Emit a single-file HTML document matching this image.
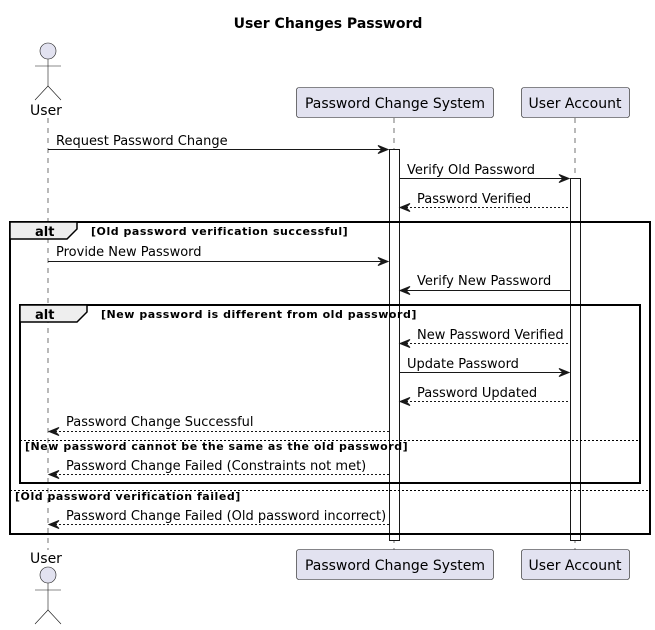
<!DOCTYPE html>
<html><head><meta charset="utf-8"><style>
html,body{margin:0;padding:0;background:#fff;}
svg{display:block;font-family:"DejaVu Sans","Liberation Sans",sans-serif;}
.m{font-size:13px;fill:#000;}
.g{font-size:11px;font-weight:bold;fill:#000;letter-spacing:0.53px;}
</style></head><body>
<svg width="655" height="630" viewBox="0 0 655 630" xmlns="http://www.w3.org/2000/svg">
<defs>
<g id="ar"><polygon points="-10,-4 0,0 -10,4 -6,0" fill="#181818" stroke="#181818" stroke-width="1"/></g>
<g id="al"><polygon points="10,-4 0,0 10,4 6,0" fill="#181818" stroke="#181818" stroke-width="1"/></g>
</defs>
<text x="328" y="28" text-anchor="middle" font-size="14" font-weight="bold">User Changes Password</text>

<g stroke="#181818" stroke-width="0.6" stroke-dasharray="5,5">
<line x1="48" y1="118" x2="48" y2="550"/>
<line x1="394" y1="118" x2="394" y2="550"/>
<line x1="575" y1="118" x2="575" y2="550"/>
</g>

<g fill="none" stroke="#181818" stroke-width="0.6">
<circle cx="48" cy="51" r="8" fill="#E2E2F0"/>
<line x1="48" y1="59" x2="48" y2="86"/><line x1="35" y1="66" x2="61" y2="66"/>
<polyline points="35,100 48,86 61,100"/>
<circle cx="48" cy="575" r="8" fill="#E2E2F0"/>
<line x1="48" y1="583" x2="48" y2="610"/><line x1="35" y1="590" x2="61" y2="590"/>
<polyline points="35,624 48,610 61,624"/>
</g>
<text x="46" y="115" text-anchor="middle" font-size="14">User</text>
<text x="46" y="563" text-anchor="middle" font-size="14">User</text>

<g fill="#E2E2F0" stroke="#181818" stroke-width="0.6">
<rect x="296.5" y="87.5" width="197" height="30" rx="2.5"/>
<rect x="521.5" y="87.5" width="108" height="30" rx="2.5"/>
<rect x="296.5" y="549.5" width="197" height="30" rx="2.5"/>
<rect x="521.5" y="549.5" width="108" height="30" rx="2.5"/>
</g>
<g font-size="14" text-anchor="middle">
<text x="395" y="108">Password Change System</text>
<text x="575" y="108">User Account</text>
<text x="395" y="570">Password Change System</text>
<text x="575" y="570">User Account</text>
</g>

<g fill="#fff" stroke="#181818" stroke-width="1">
<rect x="389.5" y="149.5" width="10" height="391"/>
<rect x="570.5" y="178.5" width="10" height="362"/>
</g>

<g fill="none" stroke="#000" stroke-width="2">
<rect x="10" y="222" width="640" height="312"/>
<rect x="20" y="305" width="620" height="178"/>
</g>
<path d="M10,222 H77 V229 L67,239 H10 Z" fill="#EEEEEE" stroke="#000" stroke-width="1.5"/>
<path d="M20,305 H87 V312 L77,322 H20 Z" fill="#EEEEEE" stroke="#000" stroke-width="1.5"/>
<text x="35" y="236" font-size="13" font-weight="bold">alt</text>
<text x="35" y="319" font-size="13" font-weight="bold">alt</text>
<text class="g" x="91" y="235">[Old password verification successful]</text>
<text class="g" x="101" y="318">[New password is different from old password]</text>
<g stroke="#000" stroke-width="1" stroke-dasharray="2,2">
<line x1="20" y1="440.5" x2="640" y2="440.5"/>
<line x1="10" y1="490.5" x2="650" y2="490.5"/>
</g>
<text class="g" x="25" y="450">[New password cannot be the same as the old password]</text>
<text class="g" x="15" y="500">[Old password verification failed]</text>

<g stroke="#181818" stroke-width="1">
<line x1="48" y1="149.5" x2="386" y2="149.5"/>
<line x1="399" y1="178.5" x2="567" y2="178.5"/>
<line x1="402" y1="207.5" x2="570" y2="207.5" stroke-dasharray="2,2"/>
<line x1="48" y1="261.5" x2="386" y2="261.5"/>
<line x1="402" y1="290.5" x2="570" y2="290.5"/>
<line x1="402" y1="343.5" x2="570" y2="343.5" stroke-dasharray="2,2"/>
<line x1="399" y1="372.5" x2="567" y2="372.5"/>
<line x1="402" y1="401.5" x2="570" y2="401.5" stroke-dasharray="2,2"/>
<line x1="51" y1="431.5" x2="389" y2="431.5" stroke-dasharray="2,2"/>
<line x1="51" y1="474.5" x2="389" y2="474.5" stroke-dasharray="2,2"/>
<line x1="51" y1="524.5" x2="389" y2="524.5" stroke-dasharray="2,2"/>
</g>
<use href="#ar" x="388" y="149.5"/>
<use href="#ar" x="569" y="178.5"/>
<use href="#al" x="400" y="207.5"/>
<use href="#ar" x="388" y="261.5"/>
<use href="#al" x="400" y="290.5"/>
<use href="#al" x="400" y="343.5"/>
<use href="#ar" x="569" y="372.5"/>
<use href="#al" x="400" y="401.5"/>
<use href="#al" x="49" y="431.5"/>
<use href="#al" x="49" y="474.5"/>
<use href="#al" x="49" y="524.5"/>

<text class="m" x="56" y="145">Request Password Change</text>
<text class="m" x="407" y="174">Verify Old Password</text>
<text class="m" x="417" y="203">Password Verified</text>
<text class="m" x="56" y="256">Provide New Password</text>
<text class="m" x="417" y="285">Verify New Password</text>
<text class="m" x="417" y="339">New Password Verified</text>
<text class="m" x="407" y="368">Update Password</text>
<text class="m" x="417" y="397">Password Updated</text>
<text class="m" x="66" y="426">Password Change Successful</text>
<text class="m" x="66" y="470">Password Change Failed (Constraints not met)</text>
<text class="m" x="66" y="520">Password Change Failed (Old password incorrect)</text>
</svg>
</body></html>
